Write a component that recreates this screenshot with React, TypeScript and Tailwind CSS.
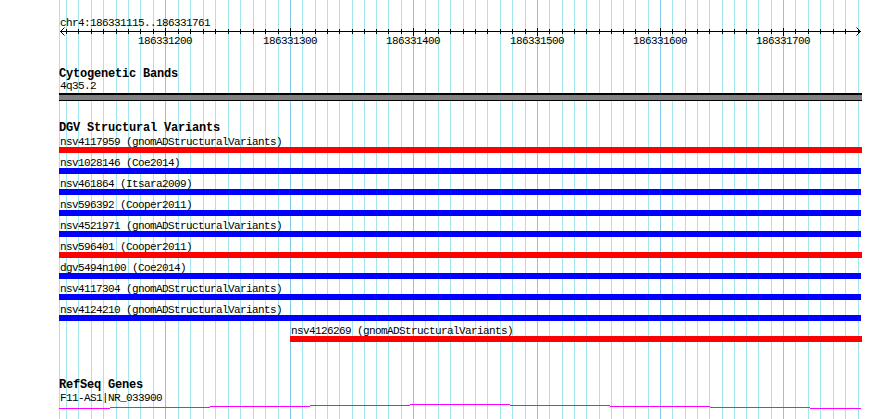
import React from "react";

const MAJORS = [165, 290, 413, 537, 660, 783];
const MAJOR_LABELS = ["186331200", "186331300", "186331400", "186331500", "186331600", "186331700"];

// column of the k-th 10bp grid line, k = -8..56 relative to the first major
function gridX(m: number) {
  if (m < 0) return Math.round(165 + m * 12.37);
  if (m >= 50) return Math.round(783 + (m - 50) * 12.45);
  const seg = Math.floor(m / 10);
  const w = m % 10;
  return Math.round(MAJORS[seg] + ((MAJORS[seg + 1] - MAJORS[seg]) * w) / 10);
}

const TICKS = Array.from({ length: 65 }, (_, i) => {
  const m = i - 8;
  return { x: gridX(m), major: m >= 0 && m % 10 === 0 && m <= 50 };
});

const rows = [
  { id: "nsv4117959", src: "gnomADStructuralVariants", red: true },
  { id: "nsv1028146", src: "Coe2014" },
  { id: "nsv461864", src: "Itsara2009" },
  { id: "nsv596392", src: "Cooper2011" },
  { id: "nsv4521971", src: "gnomADStructuralVariants" },
  { id: "nsv596401", src: "Cooper2011", red: true },
  { id: "dgv5494n100", src: "Coe2014" },
  { id: "nsv4117304", src: "gnomADStructuralVariants" },
  { id: "nsv4124210", src: "gnomADStructuralVariants" },
  { id: "nsv4126269", src: "gnomADStructuralVariants", red: true, shift: true },
];

const mono = "font-['Liberation_Mono',monospace] text-[11px] tracking-[-0.6px] leading-[12px] text-black whitespace-pre";
const bold = "font-['Liberation_Mono',monospace] font-bold text-[12px] tracking-[-0.2px] leading-[11px] text-black whitespace-pre";

function Grid() {
  return (
    <svg className="absolute left-0 top-0" width={890} height={419}>
      <rect x={59} y={0} width={1} height={419} fill="#a4e6ee" />
      {TICKS.map((t, i) => (
        <rect key={i} x={t.x} y={0} width={1} height={419} fill={t.major ? "#86c8ec" : "#a4e6ee"} />
      ))}
    </svg>
  );
}

function Ruler() {
  return (
    <div className="relative h-[20px] w-[803px]">
      <svg className="absolute left-0 top-0 overflow-visible" width={803} height={20}>
        <rect x={1} y={2} width={801} height={1} fill="#000" />
        <path d="M5.5 -1.5 L1.5 2.5 L5.5 6.5" stroke="#000" fill="none" strokeWidth={1} />
        <path d="M797.5 -1.5 L801.5 2.5 L797.5 6.5" stroke="#000" fill="none" strokeWidth={1} />
        {TICKS.map((t, i) => (
          <rect
            key={i}
            x={t.x - 59}
            y={t.major ? -1 : 0}
            width={1}
            height={t.major ? 8 : 5}
            fill="#000"
          />
        ))}
      </svg>
      {MAJORS.map((x, i) => (
        <span
          key={i}
          className={`absolute top-[6px] w-[54px] text-center ${mono}`}
          style={{ left: x - 59 - 27 }}
        >
          {MAJOR_LABELS[i]}
        </span>
      ))}
    </div>
  );
}

function GeneLine() {
  const segs = [
    [0, 51, 4],
    [51, 151, 3],
    [151, 251, 2],
    [251, 351, 1],
    [351, 451, 0],
    [451, 551, 1],
    [551, 651, 2],
    [651, 751, 3],
    [751, 802, 4],
  ];
  return (
    <svg width={803} height={5}>
      {segs.map(([a, b, y], i) => (
        <rect key={i} x={a} y={y} width={b - a} height={1} fill="#ff00ff" />
      ))}
    </svg>
  );
}

export default function App() {
  return (
    <div className="relative w-[890px] h-[419px] bg-white overflow-hidden">
      <Grid />
      <div className="relative flex flex-col pl-[59px] pt-[17px]">
        <div className={`h-[12px] pl-[1px] ${mono}`}>chr4:186331115..186331761</div>
        <Ruler />

        <div className={`mt-[20px] h-[11px] ${bold}`}>Cytogenetic Bands</div>
        <div className={`h-[13px] pl-[1px] ${mono}`}>4q35.2</div>
        <div className="h-[8px] w-[803px] bg-[#808080] border-t-2 border-b border-black" />

        <div className={`mt-[22px] h-[11px] ${bold}`}>DGV Structural Variants</div>
        <div className="mt-[2px] flex flex-col gap-[4px]">
          {rows.map((r) => (
            <div key={r.id} className={`flex flex-col ${r.shift ? "pl-[231px]" : ""}`}>
              <div className={`h-[11px] pl-[1px] ${mono}`}>
                {r.id} ({r.src})
              </div>
              <div
                className={`h-[6px] ${
                  r.red
                    ? r.shift
                      ? "w-[572px] bg-[#ff0000]"
                      : "w-[803px] bg-[#ff0000]"
                    : "w-[802px] bg-[#0000ff]"
                }`}
              />
            </div>
          ))}
        </div>

        <div className={`mt-[38px] h-[11px] ${bold}`}>RefSeq Genes</div>
        <div className={`mt-[1px] h-[12px] pl-[1px] ${mono}`}>F11-AS1|NR_033900</div>
        <GeneLine />
      </div>
    </div>
  );
}
